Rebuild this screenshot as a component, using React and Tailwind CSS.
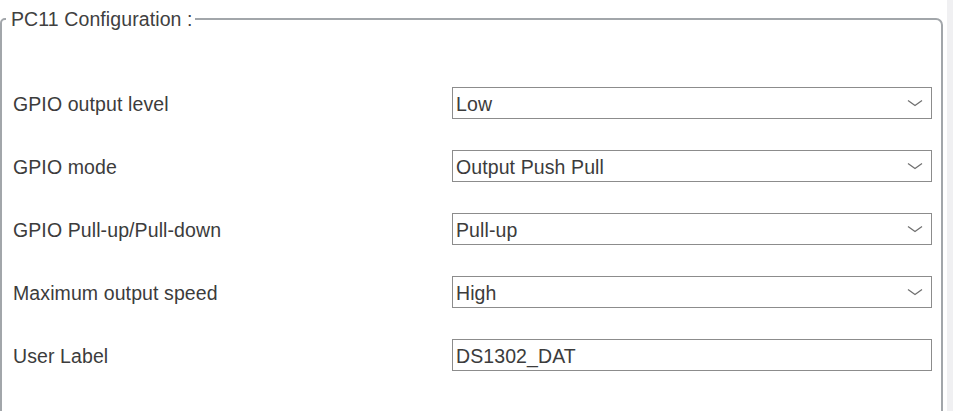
import React from "react";

const rows = [
  { label: "GPIO output level", value: "Low", select: true },
  { label: "GPIO mode", value: "Output Push Pull", select: true },
  { label: "GPIO Pull-up/Pull-down", value: "Pull-up", select: true },
  { label: "Maximum output speed", value: "High", select: true },
  { label: "User Label", value: "DS1302_DAT", select: false },
];

function Chevron() {
  return (
    <svg width="16" height="8" viewBox="0 0 16 8" className="mr-[8px]">
      <polyline points="1,1.5 8,6.5 15,1.5" fill="none" stroke="#707070" strokeWidth="1.3" />
    </svg>
  );
}

export default function App() {
  return (
    <div
      className="flex h-[411px] w-[953px] overflow-hidden bg-white text-[#3c3c3c]"
      style={{ fontFamily: '"Liberation Sans", Arial, sans-serif' }}
    >
      <fieldset className="mt-[7px] h-[460px] w-[943px] shrink-0 rounded-tl-[5px] rounded-tr-[7px] border-2 border-[#a2a6aa] p-0">
        <legend className="ml-[4px] pl-[5px] pr-[2px] text-[19.5px] leading-[24px] tracking-[0.1px] text-[#404040]">
          PC11 Configuration :
        </legend>
        <div className="mt-[56px] flex flex-col gap-[31px]">
          {rows.map((r) => (
            <div key={r.label} className="flex h-[32px] items-center">
              <div className="w-[450px] pl-[11px] pt-[3px] text-[19.5px] leading-none tracking-[0.1px]">{r.label}</div>
              <div className="flex h-[32px] w-[480px] items-center justify-between border border-[#8c8c8c] pl-[3px] text-[19.5px] leading-none tracking-[0.1px]">
                <span className="pt-[3px]">{r.value}</span>
                {r.select && <Chevron />}
              </div>
            </div>
          ))}
        </div>
      </fieldset>
      <div className="w-[4px] shrink-0 bg-white" />
      <div className="flex-1 bg-[#f0f0f2]" />
    </div>
  );
}
